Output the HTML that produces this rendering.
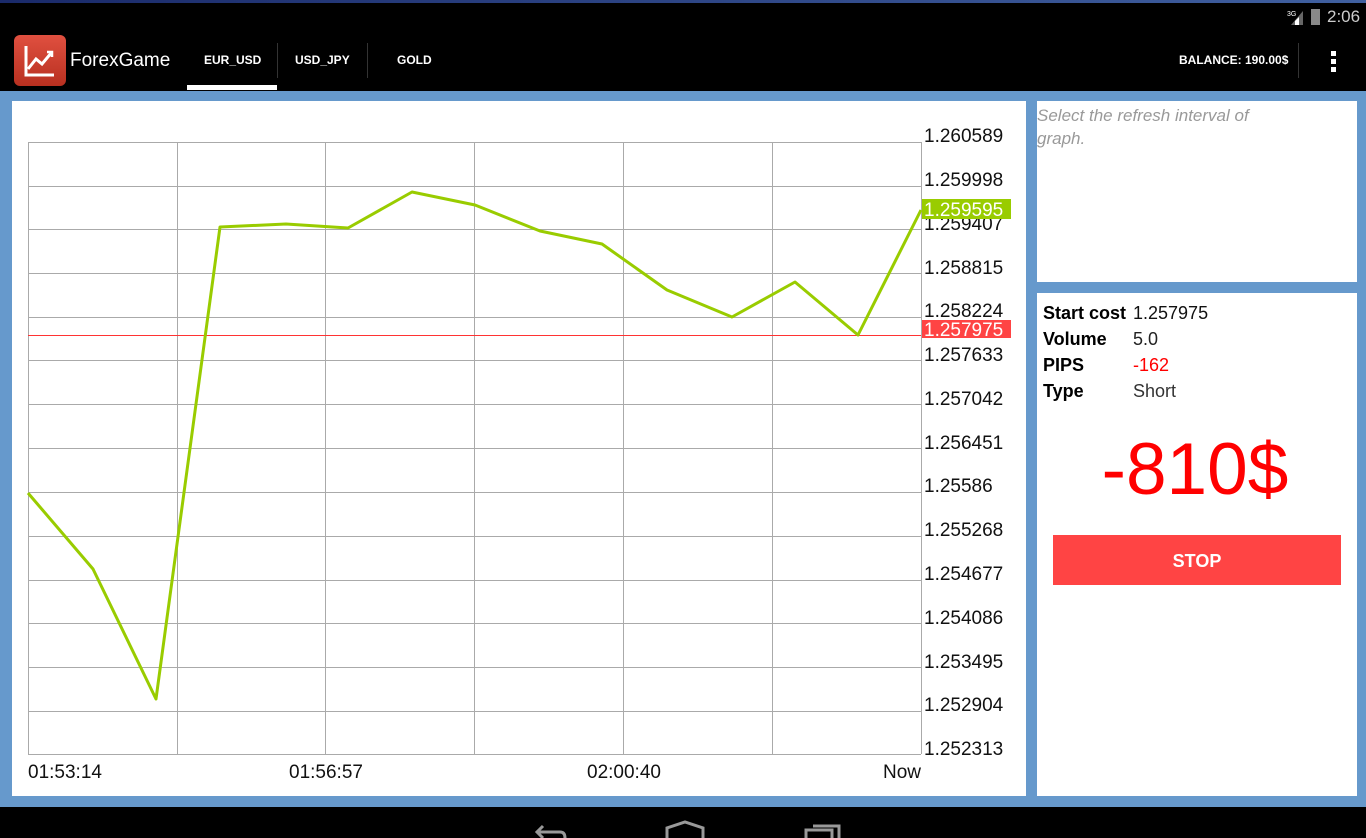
<!DOCTYPE html>
<html><head><meta charset="utf-8"><style>
*{margin:0;padding:0;box-sizing:border-box}
body{width:1366px;height:838px;overflow:hidden;background:#000;font-family:"Liberation Sans",sans-serif;position:relative}
.abs{position:absolute}
.tab{position:absolute;top:53px;color:#fff;font-size:12px;font-weight:bold}
.lbl{position:absolute;left:1043px;font-size:18px;color:#000;font-weight:bold}
.val{position:absolute;left:1133px;font-size:18px;color:#222}
</style></head><body>
<div class="abs" style="left:0;top:0;width:1366px;height:3px;background:linear-gradient(90deg,#1a2a6a,#4060a0)"></div>
<div class="abs" style="left:1287px;top:9px;width:18px;height:16px">
<svg width="18" height="16"><text x="0" y="7" font-size="7" fill="#fff" font-family="Liberation Sans">3G</text><polygon points="4,16 16,16 16,2" fill="#666"/><polygon points="8,16 12,16 12,8 8,12" fill="#fff"/></svg></div>
<div class="abs" style="left:1311px;top:9px;width:9px;height:16px;background:#888"></div>
<div class="abs" style="left:1327px;top:7px;color:#ccc;font-size:17px">2:06</div>
<div class="abs" style="left:14px;top:35px;width:52px;height:51px;border-radius:6px;background:linear-gradient(#e05040,#b83020)">
<svg width="52" height="51"><polyline points="12,11 12,40 40,40" fill="none" stroke="#fff" stroke-width="3"/><polyline points="14,34 22,24 28,29 38,17" fill="none" stroke="#fff" stroke-width="3"/><polyline points="33,17 38,17 38,22" fill="none" stroke="#fff" stroke-width="2.5"/></svg></div>
<div class="abs" style="left:70px;top:50px;color:#fff;font-size:19px">ForexGame</div>
<div class="tab" style="left:204px">EUR_USD</div>
<div class="abs" style="left:187px;top:85px;width:90px;height:5px;background:#fff"></div>
<div class="abs" style="left:277px;top:43px;width:1px;height:35px;background:#333"></div>
<div class="tab" style="left:295px">USD_JPY</div>
<div class="abs" style="left:367px;top:43px;width:1px;height:35px;background:#333"></div>
<div class="tab" style="left:397px">GOLD</div>
<div class="tab" style="left:1179px">BALANCE: 190.00$</div>
<div class="abs" style="left:1298px;top:43px;width:1px;height:35px;background:#333"></div>
<div class="abs" style="left:1331px;top:51px;width:5px;height:5px;background:#fff;box-shadow:0 8px #fff,0 16px #fff"></div>
<div class="abs" style="left:0;top:91px;width:1366px;height:716px;background:#6699cc"></div>
<div class="abs" style="left:12px;top:101px;width:1014px;height:695px;background:#fff"></div>
<div class="abs" style="left:1037px;top:101px;width:320px;height:181px;background:#fff"></div>
<div class="abs" style="left:1037px;top:104px;color:#999;font-style:italic;font-size:17px;line-height:23px;width:260px">Select the refresh interval of graph.</div>
<div class="abs" style="left:1037px;top:293px;width:320px;height:503px;background:#fff"></div>
<svg class="abs" style="left:0;top:0" width="1366" height="838" font-family="Liberation Sans">
<g stroke="#aaa" stroke-width="1">
<line x1="28" y1="142.5" x2="921" y2="142.5"/><line x1="28" y1="186.5" x2="921" y2="186.5"/><line x1="28" y1="229.5" x2="921" y2="229.5"/><line x1="28" y1="273.5" x2="921" y2="273.5"/><line x1="28" y1="317.5" x2="921" y2="317.5"/><line x1="28" y1="360.5" x2="921" y2="360.5"/><line x1="28" y1="404.5" x2="921" y2="404.5"/><line x1="28" y1="448.5" x2="921" y2="448.5"/><line x1="28" y1="492.5" x2="921" y2="492.5"/><line x1="28" y1="536.5" x2="921" y2="536.5"/><line x1="28" y1="580.5" x2="921" y2="580.5"/><line x1="28" y1="623.5" x2="921" y2="623.5"/><line x1="28" y1="667.5" x2="921" y2="667.5"/><line x1="28" y1="711.5" x2="921" y2="711.5"/><line x1="28" y1="754.5" x2="921" y2="754.5"/>
<line x1="28.5" y1="142" x2="28.5" y2="754"/><line x1="177.5" y1="142" x2="177.5" y2="754"/><line x1="325.5" y1="142" x2="325.5" y2="754"/><line x1="474.5" y1="142" x2="474.5" y2="754"/><line x1="623.5" y1="142" x2="623.5" y2="754"/><line x1="772.5" y1="142" x2="772.5" y2="754"/><line x1="921.5" y1="142" x2="921.5" y2="754"/>
</g>
<line x1="28" y1="335.5" x2="921" y2="335.5" stroke="#ff3333" stroke-width="1"/>
<polyline points="28,493 93,569 156,699 220,227 286,224 348,228 412,192 475,205 540,231 602,244 667,290 732,317 795,282 858,335 921,210" fill="none" stroke="#99cc00" stroke-width="3" stroke-linejoin="round"/>
<g font-size="19" fill="#111">
<text x="924" y="142">1.260589</text><text x="924" y="186">1.259998</text><text x="924" y="230">1.259407</text><text x="924" y="274">1.258815</text><text x="924" y="317">1.258224</text><text x="924" y="361">1.257633</text><text x="924" y="405">1.257042</text><text x="924" y="449">1.256451</text><text x="924" y="492">1.25586</text><text x="924" y="536">1.255268</text><text x="924" y="580">1.254677</text><text x="924" y="624">1.254086</text><text x="924" y="668">1.253495</text><text x="924" y="711">1.252904</text><text x="924" y="755">1.252313</text>
<text x="28" y="778">01:53:14</text><text x="289" y="778">01:56:57</text><text x="587" y="778">02:00:40</text><text x="883" y="778">Now</text>
</g>
<rect x="922" y="199" width="89" height="20" fill="#99cc00"/><text x="924" y="216" font-size="19" fill="#fff">1.259595</text>
<rect x="922" y="320" width="89" height="18" fill="#ff4444"/><text x="924" y="336" font-size="19" fill="#fff">1.257975</text>
<g fill="none" stroke="#999" stroke-width="3"><path d="M537,832 H560 Q565,832 565,838"/><path d="M543,826 L537,832 L543,838"/><path d="M667,838 V828 L685,822 L703,828 V838"/><path d="M806,838 V830 H832 V838"/><path d="M813,826 H839 V838"/></g>
</svg>
<div class="lbl" style="top:303px">Start cost</div><div class="val" style="top:303px;left:1133px;color:#111">1.257975</div>
<div class="lbl" style="top:329px">Volume</div><div class="val" style="top:329px">5.0</div>
<div class="lbl" style="top:355px">PIPS</div><div class="val" style="top:355px;color:#f00">-162</div>
<div class="lbl" style="top:381px">Type</div><div class="val" style="top:381px;color:#333">Short</div>
<div class="abs" style="left:1035px;top:425px;width:320px;text-align:center;color:#f00;font-size:73px;line-height:90px">-810$</div>
<div class="abs" style="left:1053px;top:535px;width:288px;height:50px;background:#ff4444;color:#fff;font-weight:bold;font-size:18px;text-align:center;line-height:52px">STOP</div>
</body></html>
